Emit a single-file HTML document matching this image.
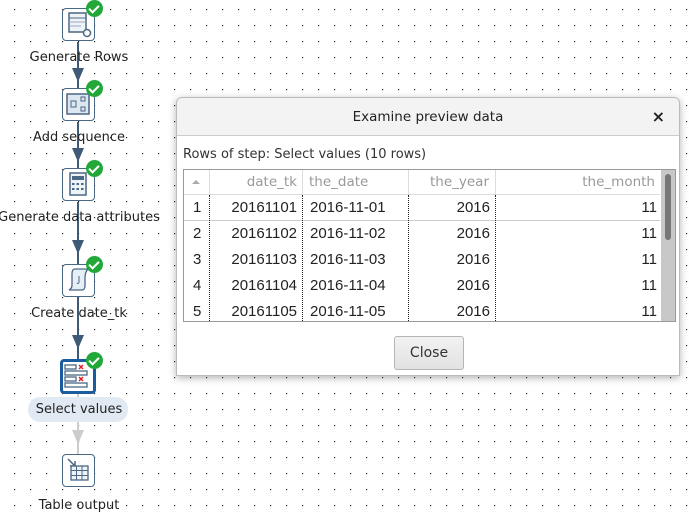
<!DOCTYPE html>
<html><head><meta charset="utf-8"><style>
*{margin:0;padding:0;box-sizing:border-box}
body{width:689px;height:517px;overflow:hidden;position:relative;background:#fff;
background-image:radial-gradient(circle at 0.5px 0.5px,#222 0.6px,transparent 0.9px);
background-size:16px 16px;background-position:14px 9px;
font-family:"Liberation Sans","DejaVu Sans",sans-serif;color:#222}
.node{position:absolute;left:62px;width:33px;height:33px;border:1.5px solid #4a6784;border-radius:4px;background:#fff}
.chk{position:absolute;left:86px;width:17px;height:17px;border-radius:50%;background:#22a83a}
.chk:after{content:"";position:absolute;left:5px;top:3px;width:4px;height:8px;border:solid #fff;border-width:0 2px 2px 0;transform:rotate(45deg)}
.lbl{position:absolute;font-family:"DejaVu Sans",sans-serif;font-size:13px;white-space:nowrap;transform:translateX(-50%);left:79px}
.line{position:absolute;left:77px;width:2px;background:#3e5a76}
.arr{position:absolute;left:72px;width:0;height:0;border-left:6px solid transparent;border-right:6px solid transparent;border-top:14px solid #3e5a76}
.dlg{position:absolute;left:176px;top:97px;width:504px;height:279px;background:#fff;border:1px solid #bbb;border-radius:6px 6px 0 0;box-shadow:0 2px 8px rgba(0,0,0,.3)}
.tb{height:38px;background:#f3f3f3;border-bottom:1px solid #ccc;border-radius:6px 6px 0 0;text-align:center;font-family:"DejaVu Sans",sans-serif;font-size:13.5px;line-height:38px;color:#222}
.x{position:absolute;right:14px;top:0;font-size:16px;font-weight:bold}
.t{position:absolute;font-family:"DejaVu Sans",sans-serif;font-size:13.5px;white-space:nowrap}
.d{font-family:"Liberation Sans",sans-serif;font-size:15px}
.r{text-align:right}
</style></head><body>

<div class="line" style="top:42px;height:46px"></div><div class="arr" style="top:68px"></div>
<div class="line" style="top:122px;height:46px"></div><div class="arr" style="top:148px"></div>
<div class="line" style="top:202px;height:62px"></div><div class="arr" style="top:240px"></div>
<div class="line" style="top:297px;height:62px"></div><div class="arr" style="top:335px"></div>
<div class="line" style="top:394px;height:60px;background:#ccc"></div><div class="arr" style="top:430px;border-top-color:#ccc"></div>

<div class="node" style="top:8px"><svg width="30" height="30"><rect x="6" y="4" width="17" height="19" fill="#eef3f8" stroke="#4a6784" stroke-width="1.5"/><line x1="6" y1="9" x2="23" y2="9" stroke="#4a6784"/><line x1="6" y1="13" x2="23" y2="13" stroke="#9ab"/><line x1="6" y1="17" x2="18" y2="17" stroke="#9ab"/><circle cx="24" cy="24" r="3.5" fill="#fff" stroke="#4a6784" stroke-width="1.5"/></svg></div>
<div class="chk" style="top:0px"></div>
<div class="lbl" style="top:50px">Generate Rows</div>

<div class="node" style="top:88px"><svg width="30" height="30"><rect x="4" y="5" width="22" height="20" fill="#dde7f0" stroke="#4a6784" stroke-width="1.5"/><rect x="8" y="12" width="5" height="6" fill="none" stroke="#4a6784"/><rect x="18" y="8" width="4" height="4" fill="none" stroke="#4a6784"/><rect x="18" y="18" width="4" height="4" fill="none" stroke="#4a6784"/></svg></div>
<div class="chk" style="top:80px"></div>
<div class="lbl" style="top:130px">Add sequence</div>

<div class="node" style="top:168px"><svg width="30" height="30"><rect x="7" y="4" width="16" height="22" fill="#eef3f8" stroke="#4a6784" stroke-width="1.5"/><rect x="9" y="7" width="12" height="4" fill="#4a6784"/><g fill="#4a6784"><rect x="9" y="14" width="2.5" height="2"/><rect x="13.5" y="14" width="2.5" height="2"/><rect x="18" y="14" width="2.5" height="2"/><rect x="9" y="19" width="2.5" height="2"/><rect x="13.5" y="19" width="2.5" height="2"/><rect x="18" y="19" width="2.5" height="2"/></g></svg></div>
<div class="chk" style="top:160px"></div>
<div class="lbl" style="top:210px">Generate data attributes</div>

<div class="node" style="top:264px"><svg width="30" height="30"><path d="M12 4h13c-2 2-3 5-3 9v8c0 2-1 4-3 4H6c2-1 3-3 3-5V9c0-3 1-5 3-5z" fill="#e6eef6" stroke="#4a6784" stroke-width="1.3"/><path d="M16 11v6c0 1-1 2-2 1" fill="none" stroke="#4a6784"/></svg></div>
<div class="chk" style="top:256px"></div>
<div class="lbl" style="top:306px">Create date_tk</div>

<div style="position:absolute;left:28px;top:397px;width:100px;height:25px;border-radius:12px;background:#e1eaf3"></div>
<div class="node" style="top:359px;left:60px;width:36px;height:35px;border:3px solid #1b5c9e"><svg width="30" height="30"><g fill="none" stroke="#4a6784" stroke-width="1.3"><rect x="2" y="3" width="11" height="4"/><rect x="2" y="9" width="22" height="4"/><rect x="2" y="15" width="11" height="4"/><rect x="2" y="21" width="22" height="4"/></g><g stroke="#e0202a" stroke-width="1.5"><path d="M16 3l4 4M20 3l-4 4M16 15l4 4M20 15l-4 4"/></g></svg></div>
<div class="chk" style="top:352px"></div>
<div class="lbl" style="top:402px">Select values</div>

<div class="node" style="top:454px"><svg width="30" height="30"><path d="M5 4l7 7M12 6v5H7" fill="none" stroke="#4a6784" stroke-width="1.5"/><rect x="8" y="11" width="17" height="14" fill="#eef3f8" stroke="#4a6784" stroke-width="1.3"/><path d="M8 15.5h17M8 20.5h17M13.5 11v14M19 11v14" stroke="#4a6784"/></svg></div>
<div class="lbl" style="top:498px">Table output</div>

<div class="dlg">
<div class="tb">Examine preview data<span class="x">×</span></div>
<div class="t" style="left:6px;top:49px;color:#333;font-size:13px">Rows of step: Select values (10 rows)</div>
<div style="position:absolute;left:6px;top:71px;width:493px;height:153px;border:1px solid #999;overflow:hidden">
 <div style="position:absolute;left:0;top:0;width:476px;height:25px;border-bottom:1px solid #ddd;background:#fff"></div>
 <div style="position:absolute;left:8px;top:10px;border-left:4px solid transparent;border-right:4px solid transparent;border-bottom:4px solid #aaa"></div>
 <div style="position:absolute;left:25px;top:0;width:1px;height:25px;background:#ddd"></div>
 <div style="position:absolute;left:118px;top:0;width:1px;height:25px;background:#ddd"></div>
 <div style="position:absolute;left:224px;top:0;width:1px;height:25px;background:#ddd"></div>
 <div style="position:absolute;left:311px;top:0;width:1px;height:25px;background:#ddd"></div>
 <div class="t r" style="left:25px;width:88px;top:4px;color:#999">date_tk</div>
 <div class="t" style="left:125px;top:4px;color:#999">the_date</div>
 <div class="t r" style="left:224px;width:81px;top:4px;color:#999">the_year</div>
 <div class="t r" style="left:311px;width:160px;top:4px;color:#999">the_month</div>
 <div style="position:absolute;left:0;top:25px;width:476px;height:26px;border-bottom:1px solid #ccc"></div>
 <div style="position:absolute;left:25px;top:25px;height:130px;border-left:1px dotted #222"></div>
 <div style="position:absolute;left:118px;top:25px;height:130px;border-left:1px dotted #222"></div>
 <div style="position:absolute;left:224px;top:25px;height:130px;border-left:1px dotted #222"></div>
 <div style="position:absolute;left:311px;top:25px;height:130px;border-left:1px dotted #222"></div>
 <div style="position:absolute;left:477px;top:0;width:15px;height:153px;background:#c8c8c8"></div>
 <div style="position:absolute;left:481px;top:4px;width:6px;height:66px;border-radius:3px;background:#777"></div>
 <div style="position:absolute;left:0;top:29px;width:476px">
  <div style="position:relative;height:26px"><span class="t d" style="left:9px">1</span><span class="t d r" style="left:25px;width:88px">20161101</span><span class="t d" style="left:126px">2016-11-01</span><span class="t d r" style="left:224px;width:82px">2016</span><span class="t d r" style="left:311px;width:162px">11</span></div>
  <div style="position:relative;height:26px"><span class="t d" style="left:9px">2</span><span class="t d r" style="left:25px;width:88px">20161102</span><span class="t d" style="left:126px">2016-11-02</span><span class="t d r" style="left:224px;width:82px">2016</span><span class="t d r" style="left:311px;width:162px">11</span></div>
  <div style="position:relative;height:26px"><span class="t d" style="left:9px">3</span><span class="t d r" style="left:25px;width:88px">20161103</span><span class="t d" style="left:126px">2016-11-03</span><span class="t d r" style="left:224px;width:82px">2016</span><span class="t d r" style="left:311px;width:162px">11</span></div>
  <div style="position:relative;height:26px"><span class="t d" style="left:9px">4</span><span class="t d r" style="left:25px;width:88px">20161104</span><span class="t d" style="left:126px">2016-11-04</span><span class="t d r" style="left:224px;width:82px">2016</span><span class="t d r" style="left:311px;width:162px">11</span></div>
  <div style="position:relative;height:26px"><span class="t d" style="left:9px">5</span><span class="t d r" style="left:25px;width:88px">20161105</span><span class="t d" style="left:126px">2016-11-05</span><span class="t d r" style="left:224px;width:82px">2016</span><span class="t d r" style="left:311px;width:162px">11</span></div>
 </div>
</div>
<div style="position:absolute;left:217px;top:238px;width:70px;height:34px;border:1px solid #b5b5b5;border-radius:3px;background:linear-gradient(#f2f2f2,#e2e2e2);text-align:center;line-height:32px;font-family:'DejaVu Sans',sans-serif;font-size:14px;color:#333">Close</div>
</div>
</body></html>
